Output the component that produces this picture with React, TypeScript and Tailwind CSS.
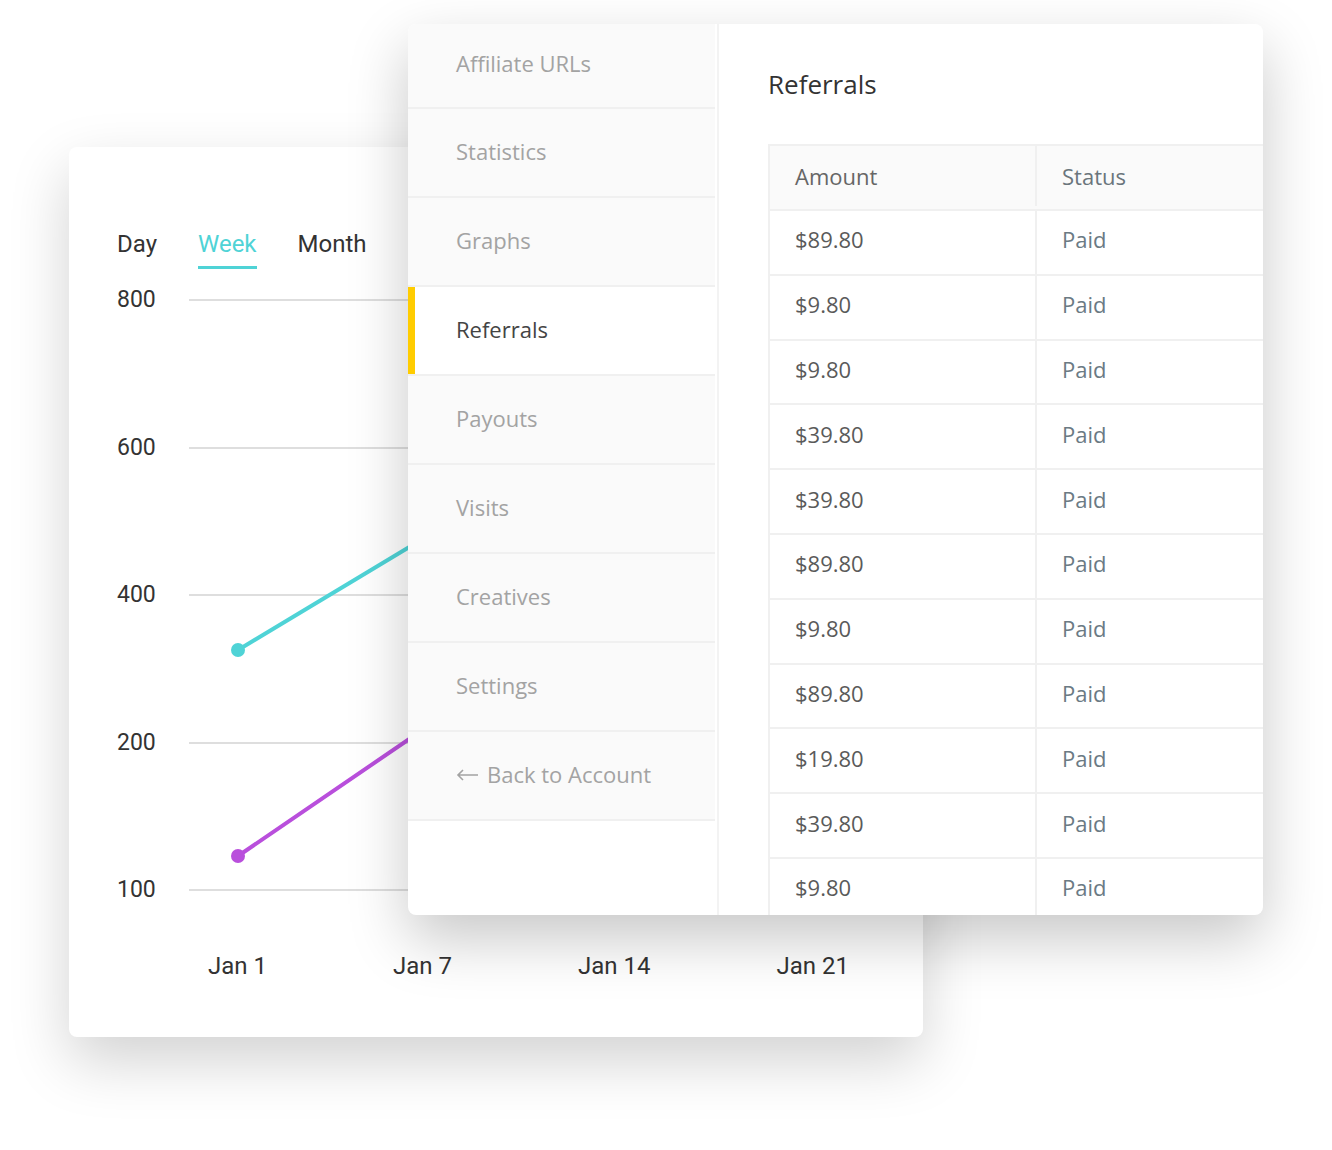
import React from 'react';

const navItems = [
  'Affiliate URLs',
  'Statistics',
  'Graphs',
  'Referrals',
  'Payouts',
  'Visits',
  'Creatives',
  'Settings',
  'Back to Account',
];

const referrals = [
  '$89.80',
  '$9.80',
  '$9.80',
  '$39.80',
  '$39.80',
  '$89.80',
  '$9.80',
  '$89.80',
  '$19.80',
  '$39.80',
  '$9.80',
];

const yTicks = ['800', '600', '400', '200', '100'];
const xTicks = ['Jan 1', 'Jan 7', 'Jan 14', 'Jan 21'];

function ChartCard() {
  return (
    <div
      className="absolute left-[69px] top-[147px] w-[854px] h-[890px] rounded-lg bg-white shadow-[0_24px_60px_rgba(0,0,0,0.18)] overflow-hidden text-[#333] text-[24px]"
      style={{ fontFamily: 'Roboto, "Liberation Sans", sans-serif' }}
    >
      <div className="pl-[48px] pt-[83px] flex flex-col">
        <div className="flex gap-[41px] h-[28px] leading-[28px]">
          <span>Day</span>
          <div className="flex flex-col">
            <span className="text-[#4fd3d6]">Week</span>
            <div className="shrink-0 mt-[8px] h-[3px] bg-[#4fd3d6]" />
          </div>
          <span>Month</span>
        </div>

        <div className="mt-[28px] flex flex-col gap-[119.5px] text-[23px]">
          {yTicks.map((t) => (
            <div key={t} className="flex items-center h-[28px]">
              <span className="w-[72px] leading-[28px]">{t}</span>
              <div className="flex-1 h-[2px] bg-[#dedede]" />
            </div>
          ))}
        </div>

        <div className="mt-[48px] pl-[91px] flex gap-[126px] h-[28px] leading-[28px]">
          {xTicks.map((t) => (
            <span key={t}>{t}</span>
          ))}
        </div>
      </div>

      <svg className="absolute inset-0 pointer-events-none" width="854" height="890" viewBox="0 0 854 890">
        <line x1="169" y1="503" x2="352" y2="393" stroke="#4fd3d6" strokeWidth="4" strokeLinecap="round" />
        <circle cx="169" cy="503" r="7" fill="#4fd3d6" />
        <line x1="169" y1="709" x2="352" y2="584" stroke="#b94fdc" strokeWidth="4" strokeLinecap="round" />
        <circle cx="169" cy="709" r="7" fill="#b94fdc" />
      </svg>
    </div>
  );
}

function BackArrow() {
  return (
    <svg width="23" height="12" viewBox="0 0 23 12" className="mr-[8px] shrink-0">
      <path d="M22 6H2M7 1L2 6l5 5" fill="none" stroke="currentColor" strokeWidth="1.6" />
    </svg>
  );
}

function PanelCard() {
  return (
    <div
      className="absolute left-[408px] top-[24px] w-[855px] h-[891px] rounded-lg bg-white shadow-[0_24px_60px_rgba(0,0,0,0.22)] overflow-hidden flex"
      style={{ fontFamily: '"Open Sans", "Liberation Sans", sans-serif' }}
    >
      <nav className="w-[307px] shrink-0 flex flex-col text-[22px]">
        {navItems.map((item, i) => {
          const active = item === 'Referrals';
          return (
            <div
              key={item}
              className={`relative flex items-center pl-[48px] ${
                i === 0 ? 'h-[83px] pb-[5px]' : 'h-[89px] pb-[2px] border-t-2 border-[#f0f0f0]'
              } ${active ? 'bg-white text-[#444]' : 'bg-[#fafafa] text-[#a3a3a3]'}`}
            >
              {active && <span className="absolute left-0 top-0 bottom-0 w-[7px] bg-[#ffcc00]" />}
              {item === 'Back to Account' && <BackArrow />}
              {item}
            </div>
          );
        })}
        <div className="border-t-2 border-[#f0f0f0]" />
      </nav>

      <div className="w-[2px] shrink-0 ml-[2px] bg-[#f3f3f3]" />

      <section className="flex-1 min-w-0 pl-[49px] pt-[43px] flex flex-col">
        <h1 className="text-[26px] leading-[34px] text-[#333]">Referrals</h1>

        <div className="mt-[43px] w-[567px] shrink-0 border-l-2 border-[#f0f0f0] text-[22px]">
          <div className="flex h-[65px] pb-[3px] border-t-2 border-[#f0f0f0] bg-[#fafafa]">
            <div className="w-[265px] flex items-center pl-[25px] text-[#666]">Amount</div>
            <div className="flex-1 flex items-center pl-[25px] border-l-2 border-[#f0f0f0] text-[#6a757c]">
              Status
            </div>
          </div>
          {referrals.map((amount, i) => (
            <div key={i} className="flex h-[64.8px] border-t-2 border-[#f0f0f0]">
              <div className="w-[265px] flex items-center pl-[25px] pb-[5px] text-[#5a5a5a]">{amount}</div>
              <div className="flex-1 flex items-center pl-[25px] pb-[5px] border-l-2 border-[#f0f0f0] text-[#6b7a84]">
                Paid
              </div>
            </div>
          ))}
        </div>
      </section>
    </div>
  );
}

export default function App() {
  return (
    <div className="relative w-[1332px] h-[1150px] bg-white overflow-hidden">
      <ChartCard />
      <PanelCard />
    </div>
  );
}
